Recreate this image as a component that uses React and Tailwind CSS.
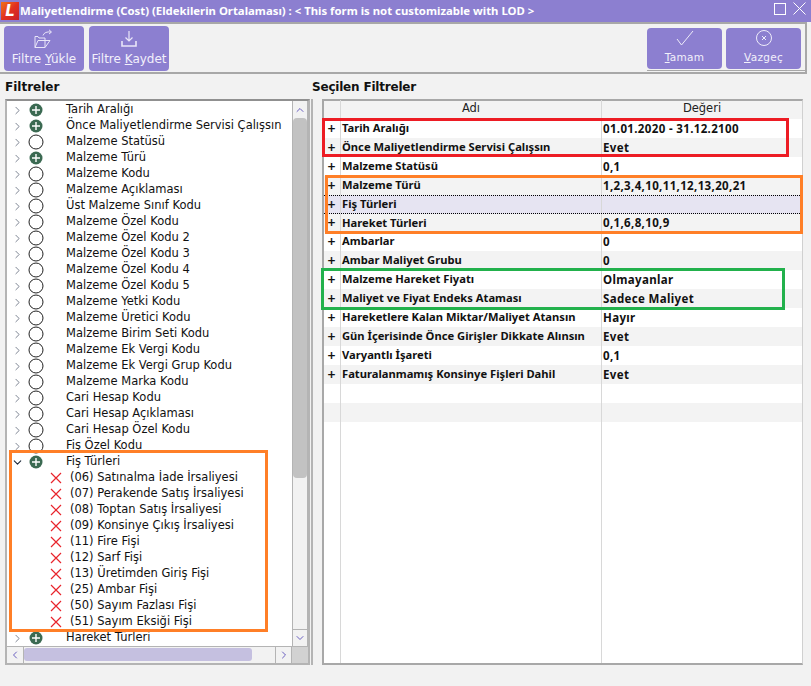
import React from 'react';
import { ChevronRight, ChevronDown, ChevronUp, ChevronLeft } from 'lucide-react';

const filters = [
  ['Tarih Aralığı', 1],
  ['Önce Maliyetlendirme Servisi Çalışsın', 1],
  ['Malzeme Statüsü', 0],
  ['Malzeme Türü', 1],
  ['Malzeme Kodu', 0],
  ['Malzeme Açıklaması', 0],
  ['Üst Malzeme Sınıf Kodu', 0],
  ['Malzeme Özel Kodu', 0],
  ['Malzeme Özel Kodu 2', 0],
  ['Malzeme Özel Kodu 3', 0],
  ['Malzeme Özel Kodu 4', 0],
  ['Malzeme Özel Kodu 5', 0],
  ['Malzeme Yetki Kodu', 0],
  ['Malzeme Üretici Kodu', 0],
  ['Malzeme Birim Seti Kodu', 0],
  ['Malzeme Ek Vergi Kodu', 0],
  ['Malzeme Ek Vergi Grup Kodu', 0],
  ['Malzeme Marka Kodu', 0],
  ['Cari Hesap Kodu', 0],
  ['Cari Hesap Açıklaması', 0],
  ['Cari Hesap Özel Kodu', 0],
  ['Fiş Özel Kodu', 0],
];

const slipTypes = [
  '(06) Satınalma İade İrsaliyesi',
  '(07) Perakende Satış İrsaliyesi',
  '(08) Toptan Satış İrsaliyesi',
  '(09) Konsinye Çıkış İrsaliyesi',
  '(11) Fire Fişi',
  '(12) Sarf Fişi',
  '(13) Üretimden Giriş Fişi',
  '(25) Ambar Fişi',
  '(50) Sayım Fazlası Fişi',
  '(51) Sayım Eksiği Fişi',
];

const rows = [
  ['Tarih Aralığı', '01.01.2020 - 31.12.2100'],
  ['Önce Maliyetlendirme Servisi Çalışsın', 'Evet'],
  ['Malzeme Statüsü', '0,1'],
  ['Malzeme Türü', '1,2,3,4,10,11,12,13,20,21'],
  ['Fiş Türleri', ''],
  ['Hareket Türleri', '0,1,6,8,10,9'],
  ['Ambarlar', '0'],
  ['Ambar Maliyet Grubu', '0'],
  ['Malzeme Hareket Fiyatı', 'Olmayanlar'],
  ['Maliyet ve Fiyat Endeks Ataması', 'Sadece Maliyet'],
  ['Hareketlere Kalan Miktar/Maliyet Atansın', 'Hayır'],
  ['Gün İçerisinde Önce Girişler Dikkate Alınsın', 'Evet'],
  ['Varyantlı İşareti', '0,1'],
  ['Faturalanmamış Konsinye Fişleri Dahil', 'Evet'],
  ['', ''],
  ['', ''],
  ['', ''],
];

function StateIcon({ on }) {
  if (on) {
    return (
      <svg width="14" height="14" viewBox="0 0 14 14" className="shrink-0">
        <circle cx="7" cy="7" r="6.5" fill="#3b6a52" />
        <path d="M7 3v8M3 7h8" stroke="#fff" strokeWidth="1.4" />
      </svg>
    );
  }
  return (
    <svg width="16" height="16" viewBox="0 0 16 16" className="shrink-0">
      <circle cx="8" cy="8" r="7" fill="none" stroke="#222" strokeWidth="1" />
    </svg>
  );
}

function TreeRow({ label, on, open }) {
  const Chevron = open ? ChevronDown : ChevronRight;
  return (
    <div className="flex h-4 shrink-0 items-center whitespace-nowrap">
      <div className="flex w-[17px] justify-end">
        <Chevron size={13} strokeWidth={open ? 2 : 1.6} className={open ? 'text-gray-800' : 'text-gray-500'} />
      </div>
      <div className="flex w-[24px] justify-center">
        <StateIcon on={on} />
      </div>
      <span className="pl-[18px]">{label}</span>
    </div>
  );
}

function SlipRow({ label }) {
  return (
    <div className="flex h-4 shrink-0 items-center whitespace-nowrap pl-[43px]">
      <svg width="12" height="12" viewBox="0 0 12 12" className="shrink-0">
        <path d="M1 1l10 10M11 1L1 11" stroke="#e8242c" strokeWidth="1.2" />
      </svg>
      <span className="pl-[8px]">{label}</span>
    </div>
  );
}

function ToolButton({ icon, first, under, rest, small }) {
  return (
    <div className={`flex flex-col items-center rounded-[4px] bg-[#8c7fd0] text-[#f2f0fb] ${small ? 'h-[41px] w-[75px] pt-[1px]' : 'h-[45px] w-[80px] pt-[3px]'}`}>
      {icon}
      <span className={`mt-[1px] whitespace-nowrap ${small ? 'text-[10.5px] tracking-[0.3px]' : 'text-[12px]'}`}>
        {first}
        <span className="underline">{under}</span>
        {rest}
      </span>
    </div>
  );
}

const OpenIcon = (
  <svg width="26" height="20" viewBox="0 0 26 20" fill="none" stroke="#e9e6f8" strokeWidth="1">
    <path d="M4 18.5V7.5h3l1 1.5h6v9.5zM4 18.5l3-7h12l-5 7" />
    <path d="M12 6.5c1-3 4-4 8-3.5M18 .8l2.5 2.2L18 5" />
  </svg>
);

const SaveIcon = (
  <svg width="26" height="20" viewBox="0 0 26 20" fill="none" stroke="#e9e6f8" strokeWidth="1.2">
    <path d="M13 2v10M9.5 8.5L13 12l3.5-3.5" />
    <path d="M6 12v5h14v-5" strokeWidth="1.6" />
  </svg>
);

const CheckIcon = (
  <svg width="26" height="20" viewBox="0 0 26 20" fill="none" stroke="#eeecfa" strokeWidth="1">
    <path d="M5 10l4.5 6L21 2" />
  </svg>
);

const CancelIcon = (
  <svg width="26" height="20" viewBox="0 0 26 20" fill="none" stroke="#eeecfa" strokeWidth="1">
    <circle cx="13" cy="9" r="7.5" />
    <path d="M11 7l4 4M15 7l-4 4" />
  </svg>
);

function AppLogo() {
  return (
    <div className="flex h-[18px] w-[18px] items-center justify-center bg-gradient-to-br from-[#f0701a] via-[#e2301f] to-[#c81e2a]">
      <span className="text-[15px] font-bold italic leading-none text-white">L</span>
    </div>
  );
}

const boldFont = { fontFamily: '"Noto Sans", Tahoma, sans-serif' };

export default function App() {
  return (
    <div className="relative h-[686px] w-[811px] overflow-hidden bg-[#f2f2f2] text-[11.5px] text-[#111]" style={{ fontFamily: '"DejaVu Sans", Tahoma, sans-serif' }}>
      <div className="flex h-[22px] items-center bg-[#8c7fd0]">
        <div className="pl-[1px]"><AppLogo /></div>
        <div className="pl-[1px] text-[11.35px] font-bold text-white whitespace-nowrap" style={boldFont}>
          Maliyetlendirme (Cost) (Eldekilerin Ortalaması) : &lt; This form is not customizable with LOD &gt;
        </div>
        <div className="ml-auto flex items-center gap-[7px] pb-[5px] pr-[5px]">
          <div className="h-[12px] w-[12px] border border-white" />
          <svg width="13" height="13" viewBox="0 0 13 13" stroke="#fff" strokeWidth="1"><path d="M.5.5l12 12M12.5.5l-12 12" /></svg>
        </div>
      </div>

      <div className="flex h-[52px] w-[807px] items-start justify-between border-y-2 border-r-2 border-[#a8a8a8] pl-[4px] pr-[4px] pt-[2px]">
        <div className="flex gap-[5px]">
          <ToolButton icon={OpenIcon} first="Filtre " under="Y" rest="ükle" />
          <ToolButton icon={SaveIcon} first="Filtre " under="K" rest="aydet" />
        </div>
        <div className="-mr-[4px] mt-[2px] flex gap-[4px] border-b border-[#a8a8a8] pb-[1px] pr-[4px]">
          <ToolButton small icon={CheckIcon} first="" under="T" rest="amam" />
          <ToolButton small icon={CancelIcon} first="" under="V" rest="azgeç" />
        </div>
      </div>

      <div className="flex pl-[5px] pr-[8px]">
        <div className="flex w-[305px] shrink-0 flex-col">
          <div className="flex h-[25px] items-end pb-[3px] text-[12px] font-bold">Filtreler</div>
          <div className="flex h-[566px] flex-col border-2 border-[#b4b4b4] bg-white border-t-[#909090]">
            <div className="flex min-h-0 flex-1">
              <div className="flex min-w-0 flex-1 flex-col overflow-hidden pt-[1px]">
                {filters.map(([label, on]) => (
                  <TreeRow key={label} label={label} on={on} />
                ))}
                <TreeRow label="Fiş Türleri" on open />
                {slipTypes.map((label) => (
                  <SlipRow key={label} label={label} />
                ))}
                <TreeRow label="Hareket Türleri" on />
              </div>
              <div className="flex w-[16px] shrink-0 flex-col border-x border-[#b4b4b4] bg-[#f2f2f2]">
                <div className="flex h-[17px] items-center justify-center">
                  <ChevronUp size={12} className="text-[#6a5fc0]" />
                </div>
                <div className="h-[360px] rounded-[4px] bg-[#c2c2c2]" />
                <div className="flex-1" />
                <div className="flex h-[17px] items-center justify-center border-t border-[#b4b4b4]">
                  <ChevronDown size={12} className="text-[#6a5fc0]" />
                </div>
              </div>
            </div>
            <div className="flex h-[17px] shrink-0 border-t border-[#b4b4b4] bg-[#f2f2f2]">
              <div className="flex w-[17px] items-center justify-center border-r border-[#b4b4b4]">
                <ChevronLeft size={12} className="text-[#6a5fc0]" />
              </div>
              <div className="flex-1 py-[1px]">
                <div className="h-[13px] w-[228px] rounded-[3px] bg-[#c5c0e0]" />
              </div>
              <div className="flex w-[17px] items-center justify-center border-x border-[#b4b4b4]">
                <ChevronRight size={12} className="text-[#6a5fc0]" />
              </div>
              <div className="w-[16px] bg-[#d2d2d2]" />
            </div>
          </div>
        </div>

        <div className="ml-[1px] mt-[25px] h-[566px] w-[2px] shrink-0 border-r-2 border-[#b4b4b4]" />

        <div className="ml-[9px] flex flex-1 flex-col">
          <div className="-ml-[10px] flex h-[25px] items-end pb-[3px] text-[12px] font-bold tracking-[-0.2px]">Seçilen Filtreler</div>
          <div className="flex h-[566px] flex-col border-l-2 border-t-2 border-b-2 border-[#a8a8a8] border-r border-r-[#d0d0d0] bg-white">
            <div className="flex h-[18px] shrink-0 items-center bg-[#f3f3f3] pb-[3px] text-[#222]">
              <div className="h-[18px] w-[17px] border-r border-[#d8d8d8]" />
              <div className="flex h-[18px] w-[261px] items-center justify-center border-r border-[#d8d8d8]">Adı</div>
              <div className="flex-1 text-center">Değeri</div>
            </div>
            {rows.map(([name, value], i) => {
              const selected = i === 4;
              const striped = i % 2 === 1;
              return (
                <div
                  key={i}
                  className={`flex h-[18.92px] shrink-0 items-center font-bold ${selected ? 'border-y border-dotted border-black bg-[#e6e4f2]' : striped ? 'bg-[#f3f3f3]' : 'bg-white'}`}
                  style={boldFont}
                >
                  <div className="flex h-full w-[17px] items-center justify-center border-r border-[#d8d8d8] pr-[1px] text-[14px] font-semibold">
                    {name ? '+' : ''}
                  </div>
                  <div className="flex h-full w-[261px] items-center whitespace-nowrap border-r border-[#d8d8d8] pl-[1px] text-[11.2px]">{name}</div>
                  <div className="whitespace-nowrap pl-[1px] text-[11.5px] tracking-[0.35px]">{value}</div>
                </div>
              );
            })}
            <div className="flex flex-1">
              <div className="w-[17px] border-r border-[#d8d8d8]" />
              <div className="w-[261px] border-r border-[#d8d8d8]" />
            </div>
          </div>
        </div>
      </div>

      {/* annotation boxes drawn over the form */}
      <div className="absolute left-[9px] top-[450px] h-[182px] w-[259px] border-[3px] border-[#ff7f27]" />
      <div className="absolute left-[322px] top-[118px] h-[39px] w-[467px] border-[3px] border-[#ed1c24]" />
      <div className="absolute left-[325px] top-[175px] h-[59px] w-[478px] border-[3px] border-[#ff7f27]" />
      <div className="absolute left-[321px] top-[268px] h-[42px] w-[464px] border-[3px] border-[#22b14c]" />
    </div>
  );
}
